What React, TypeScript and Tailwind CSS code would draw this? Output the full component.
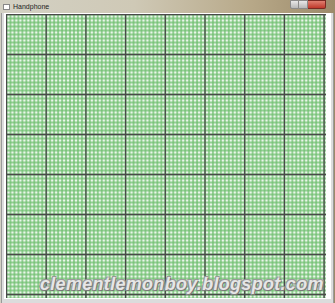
import React from "react";

function Grid() {
  const W = 320;
  const H = 284;
  const minor: React.ReactNode[] = [];
  for (let x = 0; x <= W; x += 3.97) {
    minor.push(<line key={"vx" + x} x1={x + 0.5} y1={0} x2={x + 0.5} y2={H} stroke="#6fbf6f" strokeOpacity={0.7} strokeWidth={1.9} />);
  }
  for (let y = 0; y <= H; y += 4) {
    minor.push(<line key={"hy" + y} x1={0} y1={y + 0.5} x2={W} y2={y + 0.5} stroke="#6fbf6f" strokeOpacity={0.7} strokeWidth={1.9} />);
  }
  const major: React.ReactNode[] = [];
  for (let k = 0; k <= 8; k++) {
    const x = 0.5 + k * 39.7;
    major.push(<line key={"mx" + k} x1={x} y1={0} x2={x} y2={H} stroke="#4a4a4a" strokeWidth={1.3} />);
  }
  for (let k = 0; k <= 7; k++) {
    const y = 0.5 + k * 40;
    major.push(<line key={"my" + k} x1={0} y1={y} x2={W} y2={y} stroke="#4a4a4a" strokeWidth={1.3} />);
  }
  return (
    <svg width={W} height={H} viewBox={`0 0 ${W} ${H}`} className="block">
      <rect width={W} height={H} fill="#eaf6ea" />
      {minor}
      {major}
    </svg>
  );
}

export default function App() {
  return (
    <div className="relative w-[335px] h-[303px] overflow-hidden bg-[linear-gradient(90deg,#d3d1c4_0%,#cfc9b6_40%,#b7a888_75%,#9c8a6a_100%)] font-['Liberation_Sans',sans-serif]">
      {/* title bar */}
      <div className="flex h-[13px] items-center pl-[3px]">
        <div className="w-[7px] h-[6px] border border-[#888] bg-white" />
        <span className="ml-[3px] text-[7px] leading-none text-[#222]">Handphone</span>
        <div className="ml-auto mr-[9px] flex h-[13px] items-start">
          <div className="w-[9px] h-[9px] rounded-bl-[2px] border border-[#8a8a8a] bg-[linear-gradient(#e8e8e8,#b8b8b8)]" />
          <div className="w-[9px] h-[9px] border border-l-0 border-[#8a8a8a] bg-[linear-gradient(#e8e8e8,#b8b8b8)]" />
          <div className="w-[18px] h-[9px] rounded-br-[2px] border border-l-0 border-[#7a2a22] bg-[linear-gradient(#e08070,#c0392b)]" />
        </div>
      </div>
      {/* frame */}
      <div className="mx-[1px] h-[290px] border-x border-[#9a9a9a] bg-[#dcdcdc] px-[2px] pb-[4px]">
        <div className="h-full bg-white pl-[2px] pt-[1px]">
          <Grid />
        </div>
      </div>
      {/* watermark */}
      <div className="absolute left-[40px] top-[275px] whitespace-nowrap text-[18px] font-bold italic leading-none tracking-[0.3px] text-[#e6e6e6] font-['Liberation_Sans',sans-serif] [text-shadow:1px_1px_0_#777,-1px_-1px_0_#999,1px_-1px_0_#999,-1px_1px_0_#888]">
        clementlemonboy.blogspot.com
      </div>
    </div>
  );
}
